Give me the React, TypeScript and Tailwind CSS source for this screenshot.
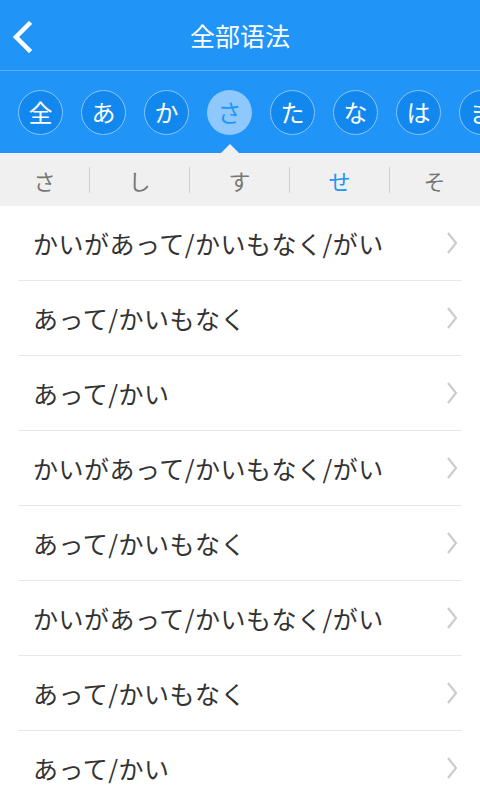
import React from "react";

const kana = ["全", "あ", "か", "さ", "た", "な", "は", "ま"];
const tabs = ["さ", "し", "す", "せ", "そ"];
const rows = [
  "かいがあって/かいもなく/がい",
  "あって/かいもなく",
  "あって/かい",
  "かいがあって/かいもなく/がい",
  "あって/かいもなく",
  "かいがあって/かいもなく/がい",
  "あって/かいもなく",
  "あって/かい",
];

const font = { fontFamily: '"Noto Sans CJK JP", "Noto Sans CJK SC", sans-serif' };

export default function App() {
  return (
    <div className="w-[480px] h-[800px] overflow-hidden bg-white" style={font}>
      <div className="bg-[#2195f7]">
        <div className="relative h-[71px] flex items-center justify-center border-b border-[#5aaef8]">
          <svg className="absolute left-[10px] top-[21px]" width="24" height="32" viewBox="0 0 24 32">
            <path d="M19 3 L6 16 L19 29" fill="none" stroke="white" strokeWidth="4.5" strokeLinecap="square" />
          </svg>
          <span className="text-white text-[25px] leading-none">全部语法</span>
        </div>
        <div className="relative h-[82px] flex items-center gap-[18px] pl-[18px] overflow-hidden">
          {kana.map((k, i) => (
            <div
              key={i}
              className={
                i === 3
                  ? "shrink-0 w-[45px] h-[45px] rounded-full bg-[#8fc8fd] text-[#2195f7] flex items-center justify-center text-[24px] leading-none"
                  : "shrink-0 w-[45px] h-[45px] rounded-full bg-[#1288ee] border border-[#8cc4f5] text-white flex items-center justify-center text-[24px] leading-none"
              }
            >
              {k}
            </div>
          ))}
          <div className="absolute left-[221px] bottom-0 w-0 h-0 border-l-[9px] border-r-[9px] border-b-[9px] border-l-transparent border-r-transparent border-b-[#f0f0f0]" />
        </div>
      </div>
      <div className="h-[53px] bg-[#f0f0f0] flex items-center">
        {tabs.map((t, i) => (
          <React.Fragment key={i}>
            {i > 0 && <div className="w-px h-[26px] bg-[#cfcfcf]" />}
            <div
              className={
                (i === 0 || i === 4 ? "w-[89px] " : "w-[99px] ") +
                "flex justify-center text-[22px] leading-none " +
                (i === 3 ? "text-[#2195f7]" : "text-[#777777]")
              }
            >
              {t}
            </div>
          </React.Fragment>
        ))}
      </div>
      <div className="px-[18px]">
        {rows.map((r, i) => (
          <div key={i} className="h-[75px] flex items-center justify-between border-b border-[#e8e8e8] pl-[15px] pr-[4px]">
            <span className="text-[25px] text-[#333333] leading-none tracking-[0.5px]">{r}</span>
            <svg width="12" height="24" viewBox="0 0 12 24">
              <path d="M2 2 L10 12 L2 22" fill="none" stroke="#cccccc" strokeWidth="2.2" />
            </svg>
          </div>
        ))}
      </div>
    </div>
  );
}
